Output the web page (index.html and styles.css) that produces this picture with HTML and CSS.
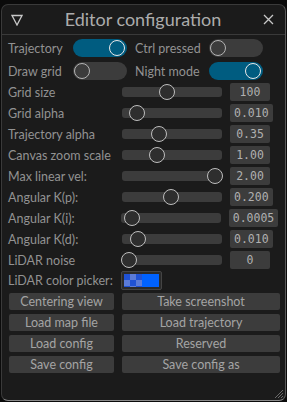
FILE: index.html
```html
<!DOCTYPE html>
<html lang="en">
<head>
  <meta charset="UTF-8">
  <title>Editor configuration</title>
  <link rel="stylesheet" href="styles.css">
</head>
<body>
  <div class="window">
    <div class="title-bar">
      <svg class="collapse" width="12" height="12" viewBox="0 0 12 12">
        <path d="M1 1.5 H11 L6 11 Z" fill="none" stroke="#c8c8c8" stroke-width="1.3" stroke-linejoin="miter"/>
      </svg>
      <div class="title">Editor configuration</div>
      <svg class="close" width="11" height="11" viewBox="0 0 11 11">
        <path d="M1 1 L10 10 M10 1 L1 10" stroke="#c8c8c8" stroke-width="1.3"/>
      </svg>
    </div>

    <div class="content">
      <div class="toggle-row">
        <span class="label">Trajectory</span>
        <span class="toggle on"><span class="knob"></span></span>
        <span class="label">Ctrl pressed</span>
        <span class="toggle"><span class="knob"></span></span>
      </div>
      <div class="toggle-row">
        <span class="label">Draw grid</span>
        <span class="toggle"><span class="knob"></span></span>
        <span class="label">Night mode</span>
        <span class="toggle on"><span class="knob"></span></span>
      </div>

      <div class="sliders">
        <div class="slider-row">
          <span class="label">Grid size</span>
          <span class="track"><span class="handle" style="left: 45px"></span></span>
          <span class="value">100</span>
        </div>
        <div class="slider-row">
          <span class="label">Grid alpha</span>
          <span class="track"><span class="handle" style="left: 15px"></span></span>
          <span class="value">0.010</span>
        </div>
        <div class="slider-row">
          <span class="label">Trajectory alpha</span>
          <span class="track"><span class="handle" style="left: 37px"></span></span>
          <span class="value">0.35</span>
        </div>
        <div class="slider-row">
          <span class="label">Canvas zoom scale</span>
          <span class="track"><span class="handle" style="left: 35px"></span></span>
          <span class="value">1.00</span>
        </div>
        <div class="slider-row">
          <span class="label">Max linear vel:</span>
          <span class="track"><span class="handle" style="left: 93px"></span></span>
          <span class="value">2.00</span>
        </div>
        <div class="slider-row">
          <span class="label">Angular K(p):</span>
          <span class="track"><span class="handle" style="left: 49px"></span></span>
          <span class="value">0.200</span>
        </div>
        <div class="slider-row">
          <span class="label">Angular K(i):</span>
          <span class="track"><span class="handle" style="left: 11px"></span></span>
          <span class="value">0.0005</span>
        </div>
        <div class="slider-row">
          <span class="label">Angular K(d):</span>
          <span class="track"><span class="handle" style="left: 16px"></span></span>
          <span class="value">0.010</span>
        </div>
        <div class="slider-row">
          <span class="label">LiDAR noise</span>
          <span class="track"><span class="handle" style="left: 7px"></span></span>
          <span class="value">0</span>
        </div>
        <div class="slider-row picker-row">
          <span class="label">LiDAR color picker:</span>
          <span class="swatch">
            <span class="checker"></span>
            <span class="solid"></span>
          </span>
        </div>
      </div>

      <div class="buttons">
        <button>Centering view</button>
        <button>Take screenshot</button>
        <button>Load map file</button>
        <button>Load trajectory</button>
        <button>Load config</button>
        <button>Reserved</button>
        <button>Save config</button>
        <button>Save config as</button>
      </div>
    </div>

    <svg class="resize" width="12" height="12" viewBox="0 0 12 12">
      <path d="M11 3 L3 11 M11 6 L6 11 M11 9 L9 11" stroke="#6a6a6a" stroke-width="1"/>
    </svg>
  </div>
</body>
</html>
```

FILE: styles.css
```css
body {
  margin: 0;
  background-color: #0b0b0b;
  font-family: Lato, sans-serif;
  font-size: 12.5px;
  color: #929292;
}

.window {
  position: relative;
  box-sizing: border-box;
  width: 285px;
  height: 397px;
  margin: 4px 0 0 1px;
  background-color: #1b1b1b;
  border: 1px solid #3a3a3a;
  border-bottom-color: #8a8a8a;
  border-right-color: #5a5a5a;
  border-radius: 7px;
}

.title-bar {
  display: flex;
  align-items: center;
  height: 29px;
  padding: 0 11px 0 9px;
  border-bottom: 1px solid #3a3a3a;
}

.title {
  flex: 1;
  text-align: center;
  font-size: 18px;
  color: #acacac;
  margin-top: -1px;
}

.content {
  padding: 4px 7px 0 6px;
}

.toggle-row {
  display: flex;
  align-items: center;
  height: 18px;
  margin-bottom: 5px;
}

.toggle-row .label:first-child {
  width: 65px;
}

.toggle-row .label:nth-child(3) {
  width: 74px;
  margin-left: 8px;
}

.toggle {
  position: relative;
  box-sizing: border-box;
  width: 54px;
  height: 18px;
  border-radius: 9px;
  background-color: #3c3c3c;
}

.toggle.on {
  background-color: #005c80;
}

.toggle .knob {
  position: absolute;
  top: 1px;
  left: 1px;
  box-sizing: border-box;
  width: 16px;
  height: 16px;
  border-radius: 50%;
  border: 1.5px solid #b4b4b4;
  background-color: #3c3c3c;
}

.toggle.on .knob {
  left: auto;
  right: 2px;
  border-color: #e8e8e8;
  background-color: #005c80;
}

.sliders {
  display: flex;
  flex-direction: column;
  gap: 3px;
  margin-top: -2px;
}

.slider-row {
  display: flex;
  align-items: center;
  height: 18px;
}

.slider-row .label {
  width: 114px;
  white-space: nowrap;
}

.track {
  position: relative;
  width: 100px;
  height: 10px;
  border-radius: 3px;
  background-color: #3c3c3c;
}

.handle {
  position: absolute;
  top: -3px;
  box-sizing: border-box;
  width: 16px;
  height: 16px;
  margin-left: -8px;
  border-radius: 50%;
  border: 1.5px solid #bebebe;
  background-color: #2e2e2e;
}

.value {
  box-sizing: border-box;
  min-width: 40px;
  height: 18px;
  margin-left: 8px;
  padding: 0 4px;
  border-radius: 2px;
  background-color: #3c3c3c;
  font-family: 'DejaVu Sans Mono', monospace;
  font-size: 11.5px;
  line-height: 18px;
  text-align: center;
  color: #b0b0b0;
}

.picker-row {
  height: 19px;
  margin-top: -1px;
}

.swatch {
  display: flex;
  box-sizing: border-box;
  width: 41px;
  height: 19px;
  margin-left: -1px;
  padding: 2px;
  border: 1px solid #444444;
  border-radius: 2px;
  background-color: #2a2a2a;
}

.checker {
  width: 18px;
  height: 100%;
  background-color: #2052d4;
  background-image:
    linear-gradient(45deg, #5b7bd8 25%, transparent 25%, transparent 75%, #5b7bd8 75%),
    linear-gradient(45deg, #5b7bd8 25%, transparent 25%, transparent 75%, #5b7bd8 75%);
  background-size: 12px 12px;
  background-position: 0 0, 6px 6px;
}

.solid {
  flex: 1;
  height: 100%;
  background-color: #0062ff;
}

.buttons {
  display: grid;
  grid-template-columns: 105px 158px;
  column-gap: 8px;
  row-gap: 4px;
  margin-top: 3px;
  margin-left: 1px;
}

button {
  height: 17px;
  padding: 0;
  border: none;
  border-radius: 2px;
  background-color: #3c3c3c;
  font-family: Lato, sans-serif;
  font-size: 12.5px;
  line-height: 17px;
  color: #a4a4a4;
}

.resize {
  position: absolute;
  right: 1px;
  bottom: 1px;
}
```
